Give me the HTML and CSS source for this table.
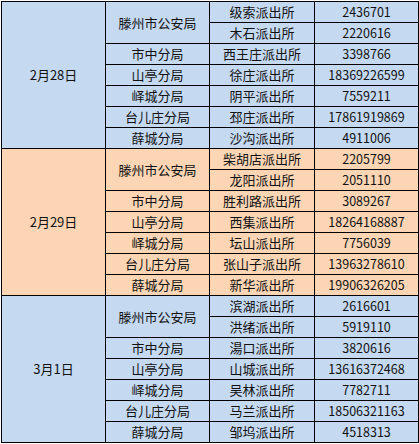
FILE: index.html
```html
<!DOCTYPE html>
<html lang="zh">
<head>
<meta charset="utf-8">
<title>派出所值班表</title>
<link rel="stylesheet" href="styles.css">
</head>
<body>
<table class="duty">
<colgroup>
<col class="c-date"><col class="c-bureau"><col class="c-station"><col class="c-phone">
</colgroup>
<tbody class="blue">
<tr><td rowspan="7">2月28日</td><td rowspan="2">滕州市公安局</td><td>级索派出所</td><td class="num">2436701</td></tr>
<tr><td>木石派出所</td><td class="num">2220616</td></tr>
<tr><td>市中分局</td><td>西王庄派出所</td><td class="num">3398766</td></tr>
<tr><td>山亭分局</td><td>徐庄派出所</td><td class="num">18369226599</td></tr>
<tr><td>峄城分局</td><td>阴平派出所</td><td class="num">7559211</td></tr>
<tr><td>台儿庄分局</td><td>邳庄派出所</td><td class="num">17861919869</td></tr>
<tr><td>薛城分局</td><td>沙沟派出所</td><td class="num">4911006</td></tr>
</tbody>
<tbody class="orange">
<tr><td rowspan="7">2月29日</td><td rowspan="2">滕州市公安局</td><td>柴胡店派出所</td><td class="num">2205799</td></tr>
<tr><td>龙阳派出所</td><td class="num">2051110</td></tr>
<tr><td>市中分局</td><td>胜利路派出所</td><td class="num">3089267</td></tr>
<tr><td>山亭分局</td><td>西集派出所</td><td class="num">18264168887</td></tr>
<tr><td>峄城分局</td><td>坛山派出所</td><td class="num">7756039</td></tr>
<tr><td>台儿庄分局</td><td>张山子派出所</td><td class="num">13963278610</td></tr>
<tr><td>薛城分局</td><td>新华派出所</td><td class="num">19906326205</td></tr>
</tbody>
<tbody class="blue">
<tr><td rowspan="7">3月1日</td><td rowspan="2">滕州市公安局</td><td>滨湖派出所</td><td class="num">2616601</td></tr>
<tr><td>洪绪派出所</td><td class="num">5919110</td></tr>
<tr><td>市中分局</td><td>湯口派出所</td><td class="num">3820616</td></tr>
<tr><td>山亭分局</td><td>山城派出所</td><td class="num">13616372468</td></tr>
<tr><td>峄城分局</td><td>吴林派出所</td><td class="num">7782711</td></tr>
<tr><td>台儿庄分局</td><td>马兰派出所</td><td class="num">18506321163</td></tr>
<tr><td>薛城分局</td><td>邹坞派出所</td><td class="num">4518313</td></tr>
</tbody>
</table>
</body>
</html>
```
FILE: styles.css
```css
html, body {
  margin: 0;
  padding: 0;
  background: #ffffff;
}
body {
  padding: 1px 0 0 1px;
}
.duty {
  border-collapse: collapse;
  table-layout: fixed;
  width: 417px;
  font-family: "Noto Sans CJK SC", "Noto Sans", sans-serif;
  font-size: 13px;
  color: #111;
}
.c-date { width: 104px; }
.c-bureau { width: 104px; }
.c-station { width: 105px; }
.c-phone { width: 104px; }
.duty td {
  border: 1px solid #000;
  height: 20px;
  padding: 0;
  line-height: 20px;
  text-align: center;
  vertical-align: middle;
  white-space: nowrap;
}
.duty td.num {
  font-size: 12.5px;
}
.blue td { background: #c5d9f1; }
.orange td { background: #fcd5b4; }
```
